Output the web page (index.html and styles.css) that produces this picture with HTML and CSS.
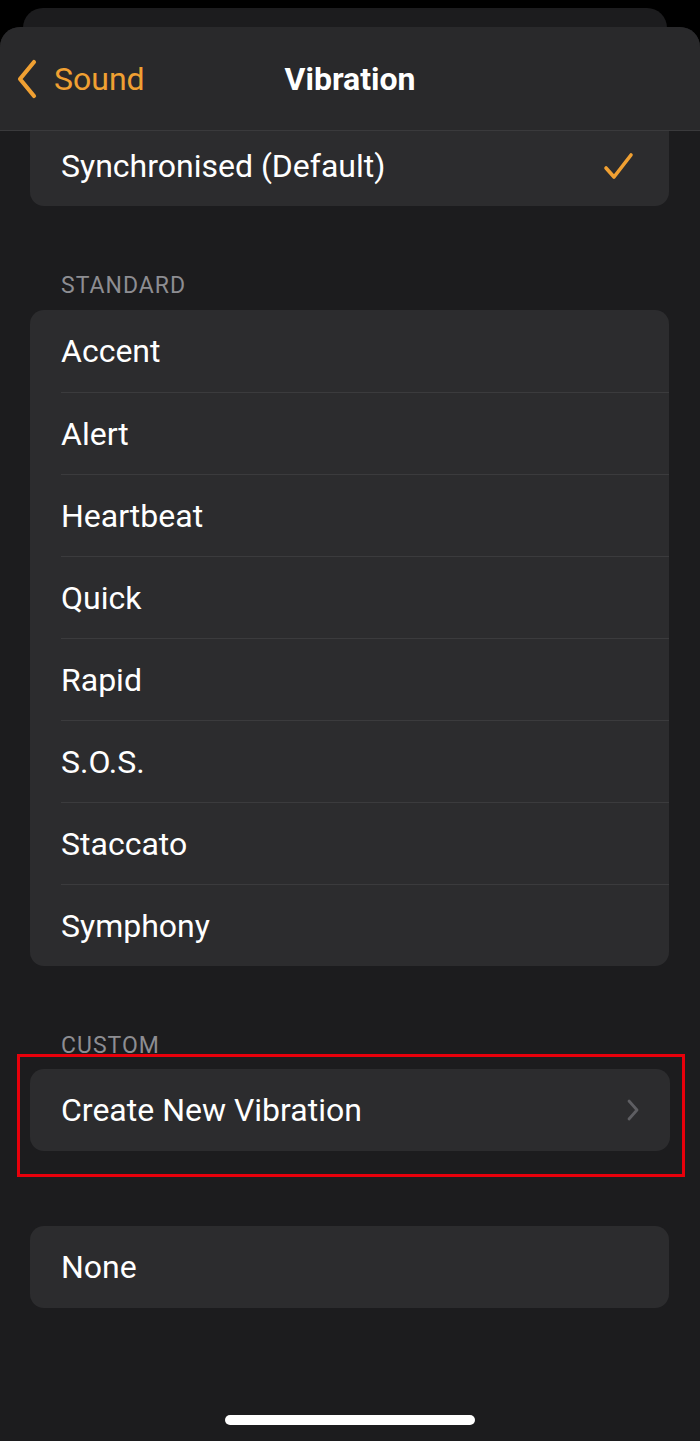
FILE: index.html
```html
<!DOCTYPE html>
<html>
<head>
<meta charset="utf-8">
<link rel="stylesheet" href="styles.css">
</head>
<body>
<div class="screen">
  <div class="behind"></div>
  <div class="sheet">
    <div class="nav">
      <div class="back">
        <svg class="back-icon" width="24" height="40" viewBox="0 0 24 40"><path d="M19 3 L5 20 L19 37" fill="none" stroke="#f0a032" stroke-width="4.2" stroke-linecap="round" stroke-linejoin="round"/></svg>
        <span>Sound</span>
      </div>
      <div class="title">Vibration</div>
    </div>
    <div class="content">
      <div class="card first">
        <div class="row"><span>Synchronised (Default)</span>
          <svg class="check" width="34" height="30" viewBox="0 0 34 30"><path d="M4 17 L12 26 L29 4" fill="none" stroke="#f0a032" stroke-width="3.6" stroke-linecap="round" stroke-linejoin="round"/></svg>
        </div>
      </div>
      <div class="label">STANDARD</div>
      <div class="card">
        <div class="row">Accent</div>
        <div class="row">Alert</div>
        <div class="row">Heartbeat</div>
        <div class="row">Quick</div>
        <div class="row">Rapid</div>
        <div class="row">S.O.S.</div>
        <div class="row">Staccato</div>
        <div class="row">Symphony</div>
      </div>
      <div class="label custom">CUSTOM</div>
      <div class="highlight">
        <div class="card">
          <div class="row"><span>Create New Vibration</span>
            <svg class="chev" width="14" height="24" viewBox="0 0 14 24"><path d="M3 3 L11 12 L3 21" fill="none" stroke="#5e5e62" stroke-width="2.8" stroke-linecap="round" stroke-linejoin="round"/></svg>
          </div>
        </div>
      </div>
      <div class="card none">
        <div class="row">None</div>
      </div>
    </div>
    <div class="home"></div>
  </div>
</div>
</body>
</html>
```
FILE: styles.css
```css
html, body {
  margin: 0;
  padding: 0;
  background: #000;
}
.screen {
  width: 700px;
  height: 1441px;
  background: #000;
  position: relative;
  overflow: hidden;
  font-family: Roboto, "Noto Sans", sans-serif;
}
.behind {
  position: absolute;
  left: 23px;
  right: 33px;
  top: 8px;
  height: 60px;
  background: #1c1c1e;
  border-radius: 20px;
}
.sheet {
  position: absolute;
  left: 0;
  right: 0;
  top: 27px;
  bottom: 0;
  background: #1c1c1e;
  border-radius: 20px 20px 0 0;
  overflow: hidden;
  display: flex;
  flex-direction: column;
}
.nav {
  height: 103px;
  background: #29292b;
  border-bottom: 1px solid #3a3a3c;
  display: flex;
  align-items: center;
  justify-content: center;
  position: relative;
  flex-shrink: 0;
}
.back {
  position: absolute;
  left: 15px;
  top: 32px;
  display: flex;
  align-items: center;
  gap: 15px;
  color: #f0a032;
  font-size: 32px;
}
.title {
  color: #fff;
  font-size: 32px;
  font-weight: 700;
}
.content {
  padding: 0 31px 0 30px;
  display: flex;
  flex-direction: column;
}
.card {
  background: #2c2c2e;
  border-radius: 14px;
  overflow: hidden;
}
.card.first {
  border-radius: 0 0 14px 14px;
}
.row {
  height: 81px;
  margin-left: 31px;
  padding-right: 30px;
  display: flex;
  align-items: center;
  justify-content: space-between;
  color: #fff;
  font-size: 32px;
  border-top: 1px solid #3b3b3d;
}
.row:first-child {
  border-top: none;
  height: 82px;
}
.card.first .row:first-child {
  height: 70px;
  padding-bottom: 5px;
}
.check {
  margin-right: 3px;
}
.label {
  color: #8d8d92;
  font-size: 23px;
  letter-spacing: 1px;
  margin: 66px 0 0 31px;
  height: 38px;
}
.label.custom {
  margin-top: 66px;
  height: 22px;
}
.highlight {
  margin: 0 -16px 0 -13px;
  border: 3px solid #e8000b;
  padding: 12px 12px 23px 10px;
}
.chev {
  margin-right: 0;
}
.card.none {
  margin-top: 49px;
}
.home {
  position: absolute;
  left: 225px;
  width: 250px;
  top: 1388px;
  height: 10px;
  background: #fff;
  border-radius: 5px;
}
```
